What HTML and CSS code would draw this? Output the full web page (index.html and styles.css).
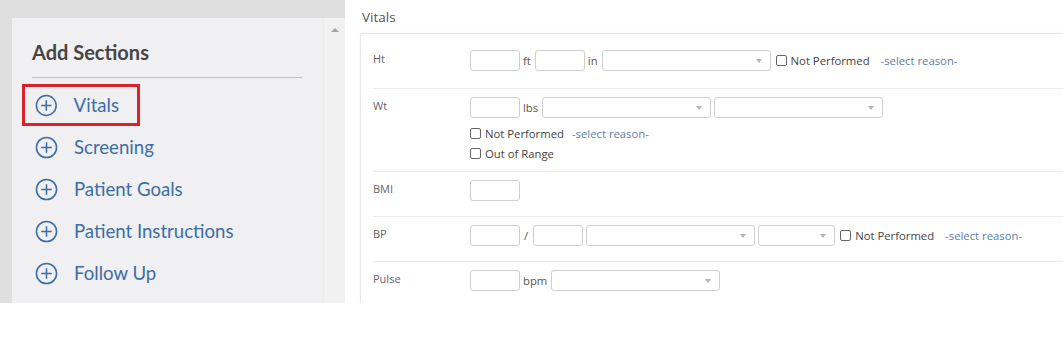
FILE: index.html
```html
<!DOCTYPE html>
<html lang="en">
<head>
    <meta charset="UTF-8">
    <title>Vitals</title>
    <link rel="stylesheet" href="styles.css">
</head>
<body>
    <div class="app">
        <aside class="sidebar">
            <div class="panel">
                <div class="panel-body">
                    <h2 class="panel-title">Add Sections</h2>
                    <ul class="section-list">
                        <li class="section-item active">
                            <svg class="plus" viewBox="0 0 24 24"><circle cx="12" cy="12" r="10.5"/><path d="M12 6.5v11M6.5 12h11"/></svg>
                            <span>Vitals</span>
                        </li>
                        <li class="section-item">
                            <svg class="plus" viewBox="0 0 24 24"><circle cx="12" cy="12" r="10.5"/><path d="M12 6.5v11M6.5 12h11"/></svg>
                            <span>Screening</span>
                        </li>
                        <li class="section-item">
                            <svg class="plus" viewBox="0 0 24 24"><circle cx="12" cy="12" r="10.5"/><path d="M12 6.5v11M6.5 12h11"/></svg>
                            <span>Patient Goals</span>
                        </li>
                        <li class="section-item">
                            <svg class="plus" viewBox="0 0 24 24"><circle cx="12" cy="12" r="10.5"/><path d="M12 6.5v11M6.5 12h11"/></svg>
                            <span>Patient Instructions</span>
                        </li>
                        <li class="section-item">
                            <svg class="plus" viewBox="0 0 24 24"><circle cx="12" cy="12" r="10.5"/><path d="M12 6.5v11M6.5 12h11"/></svg>
                            <span>Follow Up</span>
                        </li>
                    </ul>
                </div>
                <div class="scroll-track"><span class="scroll-up"></span></div>
            </div>
        </aside>

        <main class="content">
            <h3 class="section-title">Vitals</h3>
            <div class="card">
                <div class="vital-row first">
                    <div class="vital-label">Ht</div>
                    <div class="vital-fields">
                        <div class="line">
                            <span class="box"></span><span class="unit">ft</span>
                            <span class="box"></span><span class="unit">in</span>
                            <span class="select"></span>
                            <span class="check"><i></i>Not Performed</span>
                            <a class="reason">-select reason-</a>
                        </div>
                    </div>
                </div>

                <div class="vital-row tall">
                    <div class="vital-label">Wt</div>
                    <div class="vital-fields">
                        <div class="line">
                            <span class="box"></span><span class="unit">lbs</span>
                            <span class="select"></span>
                            <span class="select"></span>
                        </div>
                        <div class="sub-line">
                            <span class="check"><i></i>Not Performed</span>
                            <a class="reason">-select reason-</a>
                        </div>
                        <div class="sub-line">
                            <span class="check"><i></i>Out of Range</span>
                        </div>
                    </div>
                </div>

                <div class="vital-row">
                    <div class="vital-label">BMI</div>
                    <div class="vital-fields">
                        <div class="line"><span class="box"></span></div>
                    </div>
                </div>

                <div class="vital-row">
                    <div class="vital-label">BP</div>
                    <div class="vital-fields">
                        <div class="line">
                            <span class="box"></span><span class="unit slash">/</span>
                            <span class="box"></span>
                            <span class="select"></span>
                            <span class="select small"></span>
                            <span class="check"><i></i>Not Performed</span>
                            <a class="reason">-select reason-</a>
                        </div>
                    </div>
                </div>

                <div class="vital-row">
                    <div class="vital-label">Pulse</div>
                    <div class="vital-fields">
                        <div class="line">
                            <span class="box"></span><span class="unit">bpm</span>
                            <span class="select"></span>
                        </div>
                    </div>
                </div>
            </div>
        </main>
    </div>
</body>
</html>
```

FILE: styles.css
```css
body {
    margin: 0;
    background: #fff;
    overflow: hidden;
}
.app {
    display: flex;
    height: 303px;
    overflow: hidden;
}

/* left column */
.sidebar {
    width: 333px;
    flex: none;
    background: #dfdfdf;
    padding: 18px 0 0 12px;
}
.panel {
    display: flex;
    height: 100%;
    background: #f0eff1;
}
.panel-body {
    flex: 1;
    padding-top: 22px;
}
.panel-title {
    margin: 0 21px 0 20px;
    padding-bottom: 13px;
    border-bottom: 1px solid #bdbdbd;
    font-family: Lato, sans-serif;
    font-size: 20px;
    line-height: 24px;
    font-weight: 700;
    color: #454545;
}
.section-list {
    list-style: none;
    margin: 6px 0 0 10px;
    padding: 0;
}
.section-item {
    display: flex;
    align-items: center;
    gap: 16px;
    width: fit-content;
    height: 42px;
    box-sizing: border-box;
    padding: 0 21px 0 13px;
    font-family: Lato, sans-serif;
    font-size: 18.6px;
    color: #3b6ea6;
}
.section-item.active {
    width: 118px;
    outline: 3px solid #d9222c;
    outline-offset: -3px;
}
.plus {
    width: 23px;
    height: 23px;
    fill: none;
    stroke: #3b6ea6;
    stroke-width: 1.6;
}
.scroll-track {
    width: 21px;
    background: #f1f1f2;
    border-left: 1px solid #ebebed;
    padding-top: 10px;
    display: flex;
    justify-content: center;
}
.scroll-up {
    width: 0;
    height: 0;
    border-left: 4px solid transparent;
    border-right: 4px solid transparent;
    border-bottom: 4px solid #a3a3a3;
}

/* right column */
.content {
    flex: 1;
    padding-left: 15px;
    font-family: "Open Sans", sans-serif;
}
.section-title {
    margin: 7px 0 0 2px;
    font-size: 13.5px;
    line-height: 20px;
    font-weight: 400;
    color: #555;
}
.card {
    margin-top: 6px;
    margin-right: -4px;
    padding-top: 8px;
    background: #fff;
    border: 1px solid #e9e9e9;
    box-shadow: 0 0 3px rgba(0, 0, 0, 0.05);
}
.vital-row {
    display: flex;
    margin-left: 12px;
    padding: 8px 0 15px;
    border-top: 1px solid #ececec;
}
.vital-row.first {
    border-top: none;
    padding-bottom: 17px;
}
.vital-row.tall {
    padding-bottom: 8px;
}
.vital-label {
    width: 97px;
    flex: none;
    padding-top: 1px;
    font-size: 11px;
    line-height: 16px;
    color: #666;
}
.line {
    display: flex;
    align-items: center;
    gap: 3px;
    height: 21px;
}
.box {
    width: 50px;
    height: 21px;
    box-sizing: border-box;
    border: 1px solid #cfcfcf;
    border-radius: 3px;
}
.unit {
    font-size: 11.3px;
    color: #555;
    padding-right: 1px;
}
.unit.slash {
    padding: 0 2px 0 1px;
}
.select {
    position: relative;
    width: 169px;
    height: 21px;
    box-sizing: border-box;
    border: 1px solid #cfcfcf;
    border-radius: 3px;
}
.select.small {
    width: 77px;
}
.select:after {
    content: '';
    position: absolute;
    right: 8px;
    top: 8px;
    border-left: 3.5px solid transparent;
    border-right: 3.5px solid transparent;
    border-top: 4px solid #b5b5b5;
}
.check {
    display: inline-flex;
    align-items: center;
    gap: 4px;
    margin-left: 2px;
    font-size: 11.3px;
    color: #444;
}
.check i {
    width: 9px;
    height: 9px;
    border: 1px solid #666;
    border-radius: 2px;
}
.reason {
    margin-left: 8px;
    font-size: 11.3px;
    color: #5b80a8;
}
.sub-line {
    display: flex;
    align-items: center;
    height: 20px;
}
.vital-fields .sub-line:nth-child(2) {
    margin-top: 5px;
}
.sub-line .check {
    margin-left: 0;
}
```
